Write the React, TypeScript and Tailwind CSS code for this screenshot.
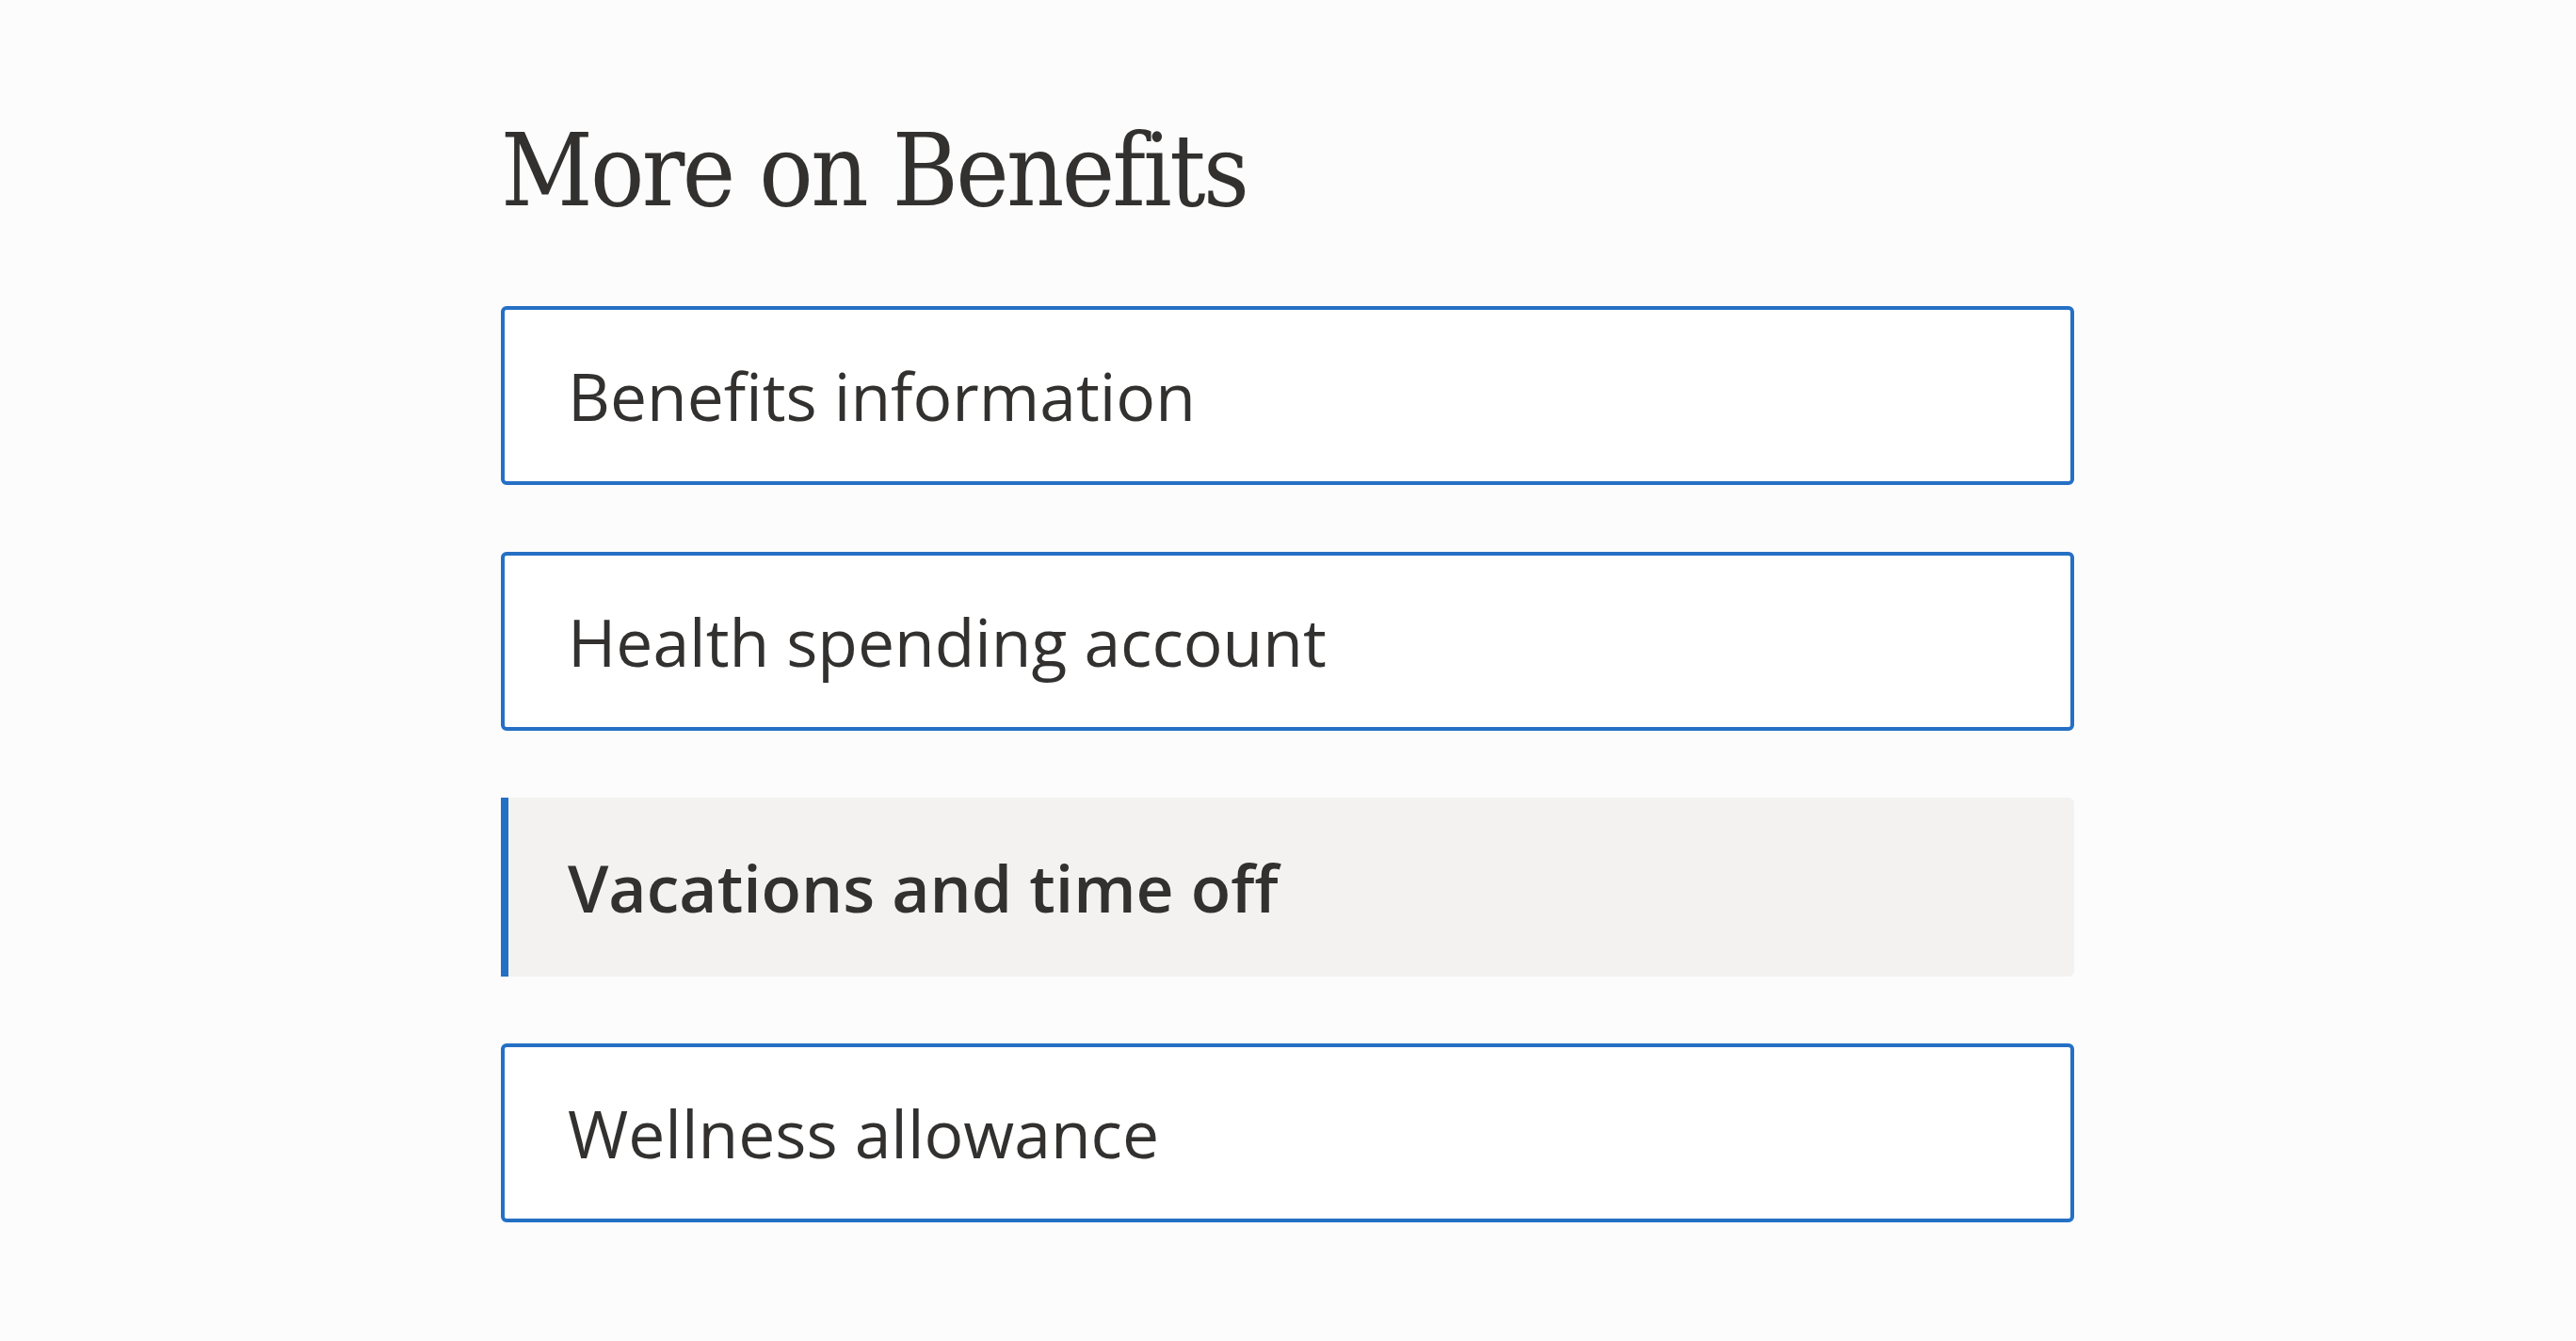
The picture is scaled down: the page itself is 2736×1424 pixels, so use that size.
import React from "react";

const items = [
  { label: "Benefits information", active: false },
  { label: "Health spending account", active: false },
  { label: "Vacations and time off", active: true },
  { label: "Wellness allowance", active: false },
];

export default function App() {
  return (
    <div className="min-h-screen w-full bg-[#fcfcfc] text-[#323130]">
      <div className="ml-[532px] w-[1671px] pt-[112px]">
        <h1
          className="h-[213px] text-[106px] leading-[140px] font-normal text-[#323130] font-stretch-condensed tracking-[-2.6px]"
          style={{ fontFamily: '"DejaVu Serif", "Liberation Serif", serif' }}
        >
          More on Benefits
        </h1>
        <div className="flex flex-col gap-[71px]">
          {items.map((it) =>
            it.active ? (
              <div
                key={it.label}
                className="flex h-[190px] items-center rounded-r-[6px] border-l-[8px] border-[#2470c5] bg-[#f3f2f1] pl-[63px] pt-[2px]"
              >
                <span
                  className="text-[69.6px] font-semibold leading-none text-[#323130]"
                  style={{ fontFamily: '"Open Sans", "Noto Sans", sans-serif' }}
                >
                  {it.label}
                </span>
              </div>
            ) : (
              <div
                key={it.label}
                className="flex h-[190px] items-center rounded-[6px] border-4 border-[#2470c5] bg-white pl-[67px] pt-[2px]"
              >
                <span
                  className="text-[69.6px] font-normal leading-none text-[#323130]"
                  style={{ fontFamily: '"Open Sans", "Noto Sans", sans-serif' }}
                >
                  {it.label}
                </span>
              </div>
            )
          )}
        </div>
      </div>
    </div>
  );
}
